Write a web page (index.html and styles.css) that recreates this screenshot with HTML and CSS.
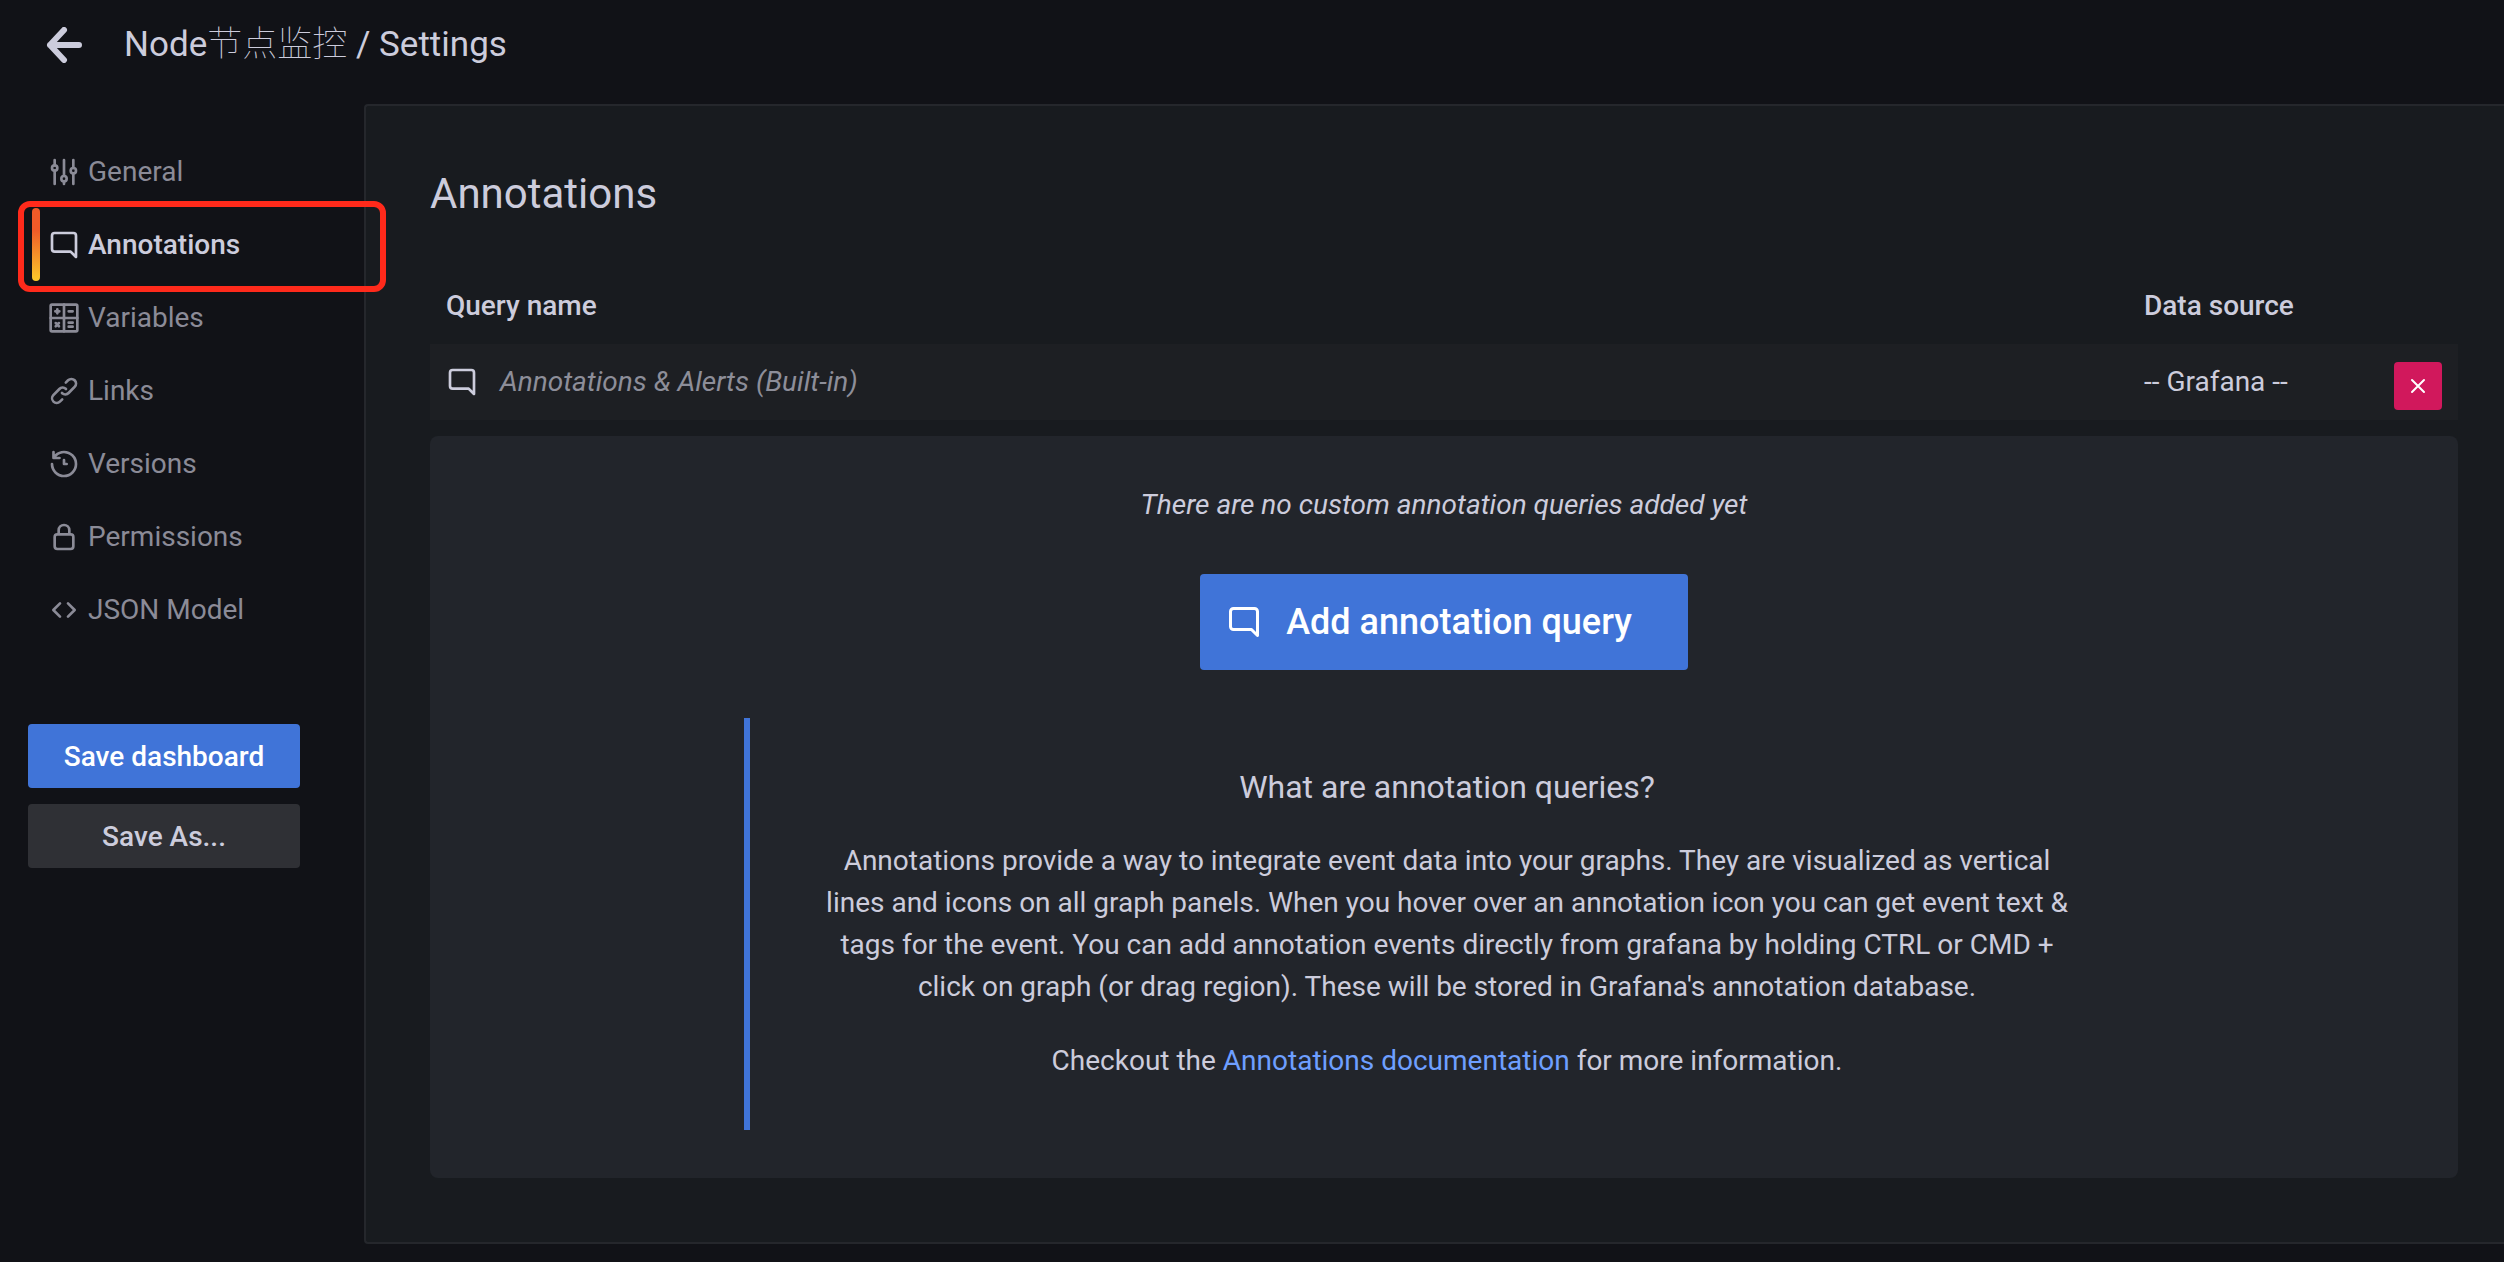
FILE: index.html
```html
<!DOCTYPE html>
<html lang="en">
<head>
  <meta charset="UTF-8">
  <meta name="viewport" content="width=device-width, initial-scale=1.0">
  <title>Node节点监控 / Settings</title>
  <link rel="stylesheet" href="styles.css">
</head>
<body>
  <!-- shared icons -->
  <svg class="sprite" aria-hidden="true">
    <symbol id="comment" viewBox="0 0 24 24">
      <path d="M19,2H5A3,3,0,0,0,2,5V15a3,3,0,0,0,3,3H16.59l3.7,3.71A1,1,0,0,0,21,22a.84.84,0,0,0,.38-.08A1,1,0,0,0,22,21V5A3,3,0,0,0,19,2Zm1,16.59-2.29-2.3A1,1,0,0,0,17,16H5a1,1,0,0,1-1-1V5A1,1,0,0,1,5,4H19a1,1,0,0,1,1,1Z"/>
    </symbol>
  </svg>

  <header class="header">
    <button class="back_btn" aria-label="Back">
      <svg class="back_icon" viewBox="0 0 36 36"><path d="M33 18H4M18 3 4 18 18 33"/></svg>
    </button>
    <p class="header_title">Node<span class="header_cjk">节点监控</span> / Settings</p>
  </header>

  <div class="page">
    <aside class="sidebar">
      <nav>
        <ul class="nav">
          <li class="nav_item">
            <a class="nav_link" href="#">
              <svg class="icon icon_line" viewBox="0 0 24 24"><path d="M5 3v4M5 11v10M12 3v12M12 19v2M19 3v6M19 13v8"/><circle cx="5" cy="9" r="2"/><circle cx="12" cy="17" r="2"/><circle cx="19" cy="11" r="2"/></svg>
              General
            </a>
          </li>
          <li class="nav_item active">
            <a class="nav_link" href="#">
              <svg class="icon"><use href="#comment"/></svg>
              Annotations
            </a>
            <div class="highlight"></div>
          </li>
          <li class="nav_item">
            <a class="nav_link" href="#">
              <svg class="icon icon_line" viewBox="0 0 24 24"><rect x="2" y="2" width="20" height="20" rx="1"/><path d="M12 2v20M2 12h20M5.500 7h3M7 5.500v3M15.500 7h3M5.800 15.800l2.400 2.400M8.200 15.800l-2.400 2.400M15.500 15.500h3M15.500 18.500h3"/></svg>
              Variables
            </a>
          </li>
          <li class="nav_item">
            <a class="nav_link" href="#">
              <svg class="icon" viewBox="0 0 24 24"><path d="M10,17.55,8.23,19.27a2.47,2.47,0,0,1-3.5-3.5l4.54-4.55a2.46,2.46,0,0,1,3.39-.09l.12.1a1,1,0,0,0,1.4-1.43A2.75,2.75,0,0,0,14,9.59,4.46,4.46,0,0,0,7.82,9.81L3.28,14.35a4.48,4.48,0,0,0,6.33,6.33L11.37,19A1,1,0,0,0,10,17.55ZM20.69,3.28a4.49,4.49,0,0,0-6.33,0L12.63,5A1,1,0,0,0,14,6.45l1.73-1.73a2.47,2.47,0,0,1,3.5,3.5l-4.54,4.55a2.46,2.46,0,0,1-3.39.09l-.12-.1a1,1,0,0,0-1.4,1.43,2.75,2.75,0,0,0,.23.21,4.47,4.47,0,0,0,6.15-.22l4.54-4.54A4.49,4.49,0,0,0,20.69,3.28Z"/></svg>
              Links
            </a>
          </li>
          <li class="nav_item">
            <a class="nav_link" href="#">
              <svg class="icon" viewBox="0 0 24 24"><path d="M12,2A10,10,0,0,0,5.12,4.77V3a1,1,0,0,0-2,0V7.5a1,1,0,0,0,1,1H8.62a1,1,0,0,0,0-2H6.22A8,8,0,1,1,4,12a1,1,0,0,0-2,0A10,10,0,1,0,12,2Zm0,6a1,1,0,0,0-1,1v3a1,1,0,0,0,1,1h2a1,1,0,0,0,0-2H13V9A1,1,0,0,0,12,8Z"/></svg>
              Versions
            </a>
          </li>
          <li class="nav_item">
            <a class="nav_link" href="#">
              <svg class="icon" viewBox="0 0 24 24"><path d="M17,9V7A5,5,0,0,0,7,7V9a3,3,0,0,0-3,3v7a3,3,0,0,0,3,3H17a3,3,0,0,0,3-3V12A3,3,0,0,0,17,9ZM9,7a3,3,0,0,1,6,0V9H9Zm9,12a1,1,0,0,1-1,1H7a1,1,0,0,1-1-1V12a1,1,0,0,1,1-1H17a1,1,0,0,1,1,1Z"/></svg>
              Permissions
            </a>
          </li>
          <li class="nav_item">
            <a class="nav_link" href="#">
              <svg class="icon icon_line" viewBox="0 0 24 24"><path d="M9 7l-5 5 5 5M15 7l5 5-5 5"/></svg>
              JSON Model
            </a>
          </li>
        </ul>
      </nav>
      <div class="sidebar_btns">
        <button class="btn btn_primary">Save dashboard</button>
        <button class="btn btn_secondary">Save As...</button>
      </div>
    </aside>

    <main class="content">
      <h1 class="content_title">Annotations</h1>

      <table class="table">
        <thead>
          <tr>
            <th>Query name</th>
            <th class="col_source">Data source</th>
            <th class="col_action"></th>
          </tr>
        </thead>
        <tbody>
          <tr>
            <td>
              <div class="query">
                <svg class="icon"><use href="#comment"/></svg>
                <em class="query_name">Annotations &amp; Alerts (Built-in)</em>
              </div>
            </td>
            <td>-- Grafana --</td>
            <td class="col_action">
              <button class="delete_btn" aria-label="Delete">
                <svg class="delete_icon" viewBox="0 0 16 16"><path d="M2 2l12 12M14 2 2 14"/></svg>
              </button>
            </td>
          </tr>
        </tbody>
      </table>

      <section class="empty">
        <p class="empty_title">There are no custom annotation queries added yet</p>
        <button class="btn btn_primary btn_large">
          <svg class="icon_large"><use href="#comment"/></svg>
          Add annotation query
        </button>
        <div class="info">
          <h2 class="info_title">What are annotation queries?</h2>
          <p>Annotations provide a way to integrate event data into your graphs. They are visualized as vertical lines and icons on all graph panels. When you hover over an annotation icon you can get event text &amp; tags for the event. You can add annotation events directly from grafana by holding CTRL or CMD + click on graph (or drag region). These will be stored in Grafana's annotation database.</p>
          <p>Checkout the <a class="link" href="#">Annotations documentation</a> for more information.</p>
        </div>
      </section>
    </main>
  </div>
</body>
</html>
```

FILE: styles.css
```css
* {
  margin: 0;
  padding: 0;
  box-sizing: border-box;
}
body {
  font-family: Roboto, "Noto Sans CJK SC", sans-serif;
  font-size: 28px;
  line-height: 42px;
  color: #ccccdc;
  background-color: #111217;
}
button {
  font-family: inherit;
  border: none;
  cursor: pointer;
}
.sprite {
  display: none;
}
.icon {
  flex: none;
  width: 32px;
  height: 32px;
  fill: currentColor;
}
.icon_line {
  fill: none;
  stroke: currentColor;
  stroke-width: 2;
  stroke-linecap: round;
  stroke-linejoin: round;
}

/* header */
.header {
  display: flex;
  align-items: center;
  gap: 42px;
  height: 104px;
  padding: 0 46px 14px;
}
.back_btn {
  display: flex;
  background: none;
}
.back_icon {
  width: 36px;
  height: 36px;
  fill: none;
  stroke: #ccccdc;
  stroke-width: 6;
  stroke-linecap: round;
  stroke-linejoin: round;
}
.header_title {
  font-size: 35px;
}
.header_cjk {
  font-weight: 100;
}

.page {
  display: grid;
  grid-template-columns: 364px 1fr;
  align-items: start;
  padding-bottom: 18px;
}

/* sidebar */
.sidebar {
  padding-top: 31px;
}
.nav {
  margin-left: 32px;
  list-style: none;
}
.nav_item {
  position: relative;
}
.nav_link {
  display: flex;
  align-items: center;
  gap: 8px;
  height: 73px;
  padding-left: 16px;
  color: #8b8b97;
  text-decoration: none;
}
.active .nav_link {
  font-weight: 500;
  color: #ccccdc;
}
.active::before {
  content: "";
  position: absolute;
  left: 0;
  top: 0;
  width: 8px;
  height: 100%;
  border-radius: 4px;
  background: linear-gradient(#f05a28 30%, #fbca2a 100%);
}
.highlight {
  position: absolute;
  top: -7px;
  right: -22px;
  bottom: -11px;
  left: -14px;
  border: 6px solid #ff2a1b;
  border-radius: 12px;
  pointer-events: none;
}
.sidebar_btns {
  display: flex;
  flex-direction: column;
  gap: 16px;
  margin: 78px 64px 0 28px;
}
.btn {
  height: 64px;
  font-size: 28px;
  font-weight: 500;
  border-radius: 4px;
}
.btn_primary {
  color: #fff;
  background-color: #4074d8;
}
.btn_secondary {
  color: #ccccdc;
  background-color: #2f3035;
}

/* content */
.content {
  padding: 64px 46px 64px 64px;
  border: 2px solid #25272c;
  border-right: none;
  border-radius: 4px 0 0 4px;
  background-color: #181b1f;
}
.content_title {
  margin-bottom: 50px;
  font-size: 42px;
  font-weight: 400;
  line-height: 48px;
}
.table {
  width: 100%;
  border-collapse: collapse;
}
.table th,
.table td {
  height: 76px;
  padding: 0 16px;
  text-align: left;
}
.table th {
  font-weight: 500;
}
.table tbody tr {
  background-color: #1d1f23;
}
.table .col_source {
  width: 250px;
}
.table .col_action {
  width: 80px;
  padding-top: 8px;
}
.query {
  display: flex;
  align-items: center;
  gap: 22px;
}
.query_name {
  color: #8d8e99;
}
.delete_btn {
  display: flex;
  align-items: center;
  justify-content: center;
  width: 48px;
  height: 48px;
  border-radius: 4px;
  background-color: #d1185c;
}
.delete_icon {
  width: 16px;
  height: 16px;
  stroke: #fff;
  stroke-width: 2;
  stroke-linecap: round;
}

/* empty list */
.empty {
  display: flex;
  flex-direction: column;
  align-items: center;
  gap: 48px;
  margin-top: 16px;
  padding: 48px;
  text-align: center;
  border-radius: 8px;
  background-color: #22252b;
}
.empty_title {
  font-style: italic;
}
.btn_large {
  display: flex;
  align-items: center;
  gap: 24px;
  height: 96px;
  padding: 0 56px 0 26px;
  font-size: 36px;
}
.icon_large {
  width: 36px;
  height: 36px;
  fill: currentColor;
}
.info {
  display: flex;
  flex-direction: column;
  gap: 32px;
  max-width: 1400px;
  padding: 48px 68px;
  border-left: 6px solid #4074d8;
}
.info_title {
  font-size: 32px;
  font-weight: 400;
}
.link {
  color: #6e9fff;
  text-decoration: none;
}
```
